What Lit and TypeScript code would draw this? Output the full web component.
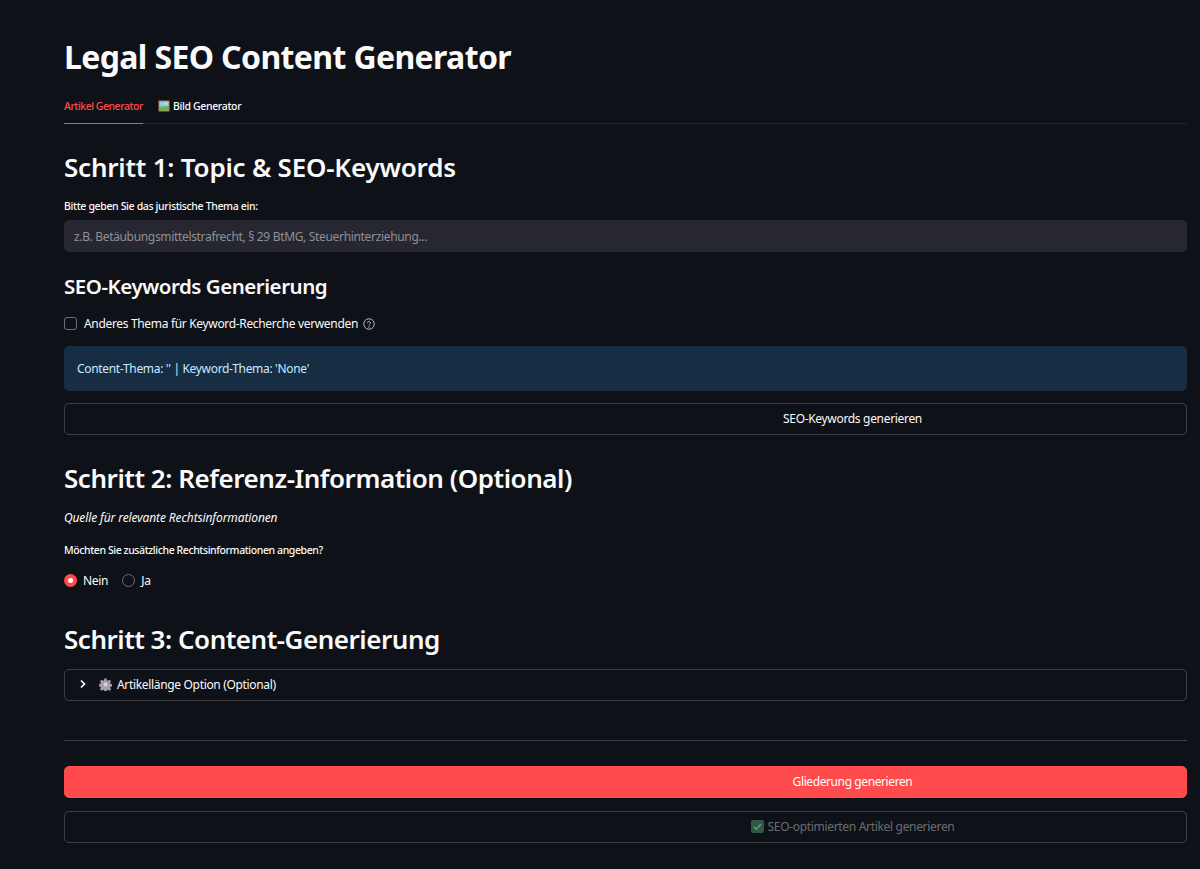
import { LitElement, html, css } from "lit";
import { customElement } from "lit/decorators.js";

@customElement("app-root")
export class AppRoot extends LitElement {
  static styles = css`
    :host { display: block; min-height: 869px; background: #0e1117; color: #fafafa; font-family: "Noto Sans", "Open Sans", sans-serif; overflow: hidden; }
    .page { display: flex; flex-direction: column; padding: 40px 13px 26px 64px; }
    h1, h2, h3, p { margin: 0; }
    h1 { font-size: 32px; line-height: 34px; font-weight: 700; letter-spacing: -0.63px; }
    h2 { font-size: 26px; line-height: 34px; font-weight: 600; }
    h3 { font-size: 20.5px; line-height: 28px; font-weight: 600; letter-spacing: -0.47px; margin-top: 20px; }
    .tabs { display: flex; gap: 15px; height: 34px; margin-top: 16px; border-bottom: 1px solid #262730; box-sizing: border-box; }
    .tab { display: flex; align-items: center; gap: 3px; font-size: 10.5px; letter-spacing: -0.34px; font-weight: 500; height: 33px; box-sizing: border-box; padding-bottom: 1px; }
    .tab.active { color: #ff4b4b; border-bottom: 1px solid #ff4b4b; height: 34px; padding-bottom: 2px; letter-spacing: -0.48px; }
    .s1 { margin-top: 26px; letter-spacing: -0.22px; }
    .label { font-size: 10.5px; line-height: 14px; font-weight: 500; }
    .l1 { margin-top: 15px; letter-spacing: -0.35px; }
    .input { margin-top: 7px; height: 32px; border-radius: 5px; background: #262730; color: #8f9097; display: flex; align-items: center; padding-left: 10px; font-size: 12px; letter-spacing: -0.33px; }
    .check { display: flex; align-items: center; margin-top: 15px; height: 17px; font-size: 12px; letter-spacing: -0.33px; }
    .box { width: 11px; height: 11px; border: 1px solid #6b6d75; border-radius: 3px; margin-right: 7px; }
    .check svg { margin-left: 5px; }
    .info { margin-top: 14px; height: 45px; border-radius: 5px; background: #172d43; color: #c7ebff; display: flex; align-items: center; padding-left: 13px; font-size: 12px; letter-spacing: -0.32px; }
    .btn { height: 32px; box-sizing: border-box; border: 1px solid rgba(250,250,250,.2); border-radius: 5px; display: flex; align-items: center; justify-content: center; padding: 0 0 2px 454px; font-size: 12px; letter-spacing: -0.32px; gap: 4px; }
    .b1 { margin-top: 12px; }
    .s2 { margin-top: 26px; letter-spacing: -0.45px; }
    .em { margin-top: 14px; font-style: italic; font-size: 12px; line-height: 18px; letter-spacing: -0.12px; }
    .l2 { margin-top: 16px; letter-spacing: -0.41px; }
    .radios { display: flex; margin-top: 15px; height: 16px; align-items: center; font-size: 12px; letter-spacing: -0.3px; }
    .radio { width: 13px; height: 13px; border-radius: 50%; box-sizing: border-box; margin-right: 6px; }
    .radio.on { background: #ff4b4b; display: flex; align-items: center; justify-content: center; }
    .radio.on::after { content: ""; width: 5px; height: 5px; border-radius: 50%; background: #fff; }
    .radio.off { border: 1px solid #6b6d75; margin-left: 14px; }
    .s3 { margin-top: 34px; letter-spacing: -0.48px; }
    .exp { margin-top: 13px; height: 32px; box-sizing: border-box; border: 1px solid rgba(250,250,250,.2); border-radius: 5px; display: flex; align-items: center; padding: 0 0 2px 13px; font-size: 12px; letter-spacing: -0.33px; }
    .exp .gear { margin-left: 11px; margin-right: 5px; }
    hr { border: 0; height: 1px; background: rgba(250,250,250,.2); margin: 39px 0 25px; width: 100%; }
    .primary { background: #ff4b4b; border-color: #ff4b4b; color: #fff; letter-spacing: -0.4px; }
    .disabled { margin-top: 13px; color: rgba(250,250,250,.4); }
  `;
  render() {
    return html`<div class="page">
      <h1>Legal SEO Content Generator</h1>
      <div class="tabs">
        <div class="tab active">Artikel Generator</div>
        <div class="tab">
          <svg width="12" height="12" viewBox="0 0 12 12">
            <rect x=".5" y=".5" width="11" height="11" fill="#b9824f"/>
            <rect x="1.5" y="1.5" width="9" height="5" fill="#8fd0ee"/>
            <rect x="1.5" y="6.5" width="9" height="4" fill="#62b35a"/>
            <path d="M1.5 7.5 4.5 5l3 2.5z" fill="#7cc46e"/>
            <circle cx="8" cy="3.5" r="1" fill="#f7e29a"/>
          </svg>
          Bild Generator
        </div>
      </div>
      <h2 class="s1">Schritt 1: Topic &amp; SEO-Keywords</h2>
      <div class="label l1">Bitte geben Sie das juristische Thema ein:</div>
      <div class="input">z.B. Betäubungsmittelstrafrecht, § 29 BtMG, Steuerhinterziehung...</div>
      <h3>SEO-Keywords Generierung</h3>
      <div class="check">
        <span class="box"></span>Anderes Thema für Keyword-Recherche verwenden
        <svg width="12" height="12" viewBox="0 0 24 24" fill="none" stroke="#b4b5b9" stroke-width="2">
          <circle cx="12" cy="12" r="10.5"/>
          <path d="M8.8 9a3.3 3.3 0 0 1 6.3 1c0 2.2-3.1 2.6-3.1 4.4" stroke-linecap="round"/>
          <circle cx="12" cy="18" r=".6" fill="#b4b5b9"/>
        </svg>
      </div>
      <div class="info">Content-Thema: '' | Keyword-Thema: 'None'</div>
      <div class="btn b1">SEO-Keywords generieren</div>
      <h2 class="s2">Schritt 2: Referenz-Information (Optional)</h2>
      <p class="em">Quelle für relevante Rechtsinformationen</p>
      <div class="label l2">Möchten Sie zusätzliche Rechtsinformationen angeben?</div>
      <div class="radios">
        <span class="radio on"></span>Nein<span class="radio off"></span>Ja
      </div>
      <h2 class="s3">Schritt 3: Content-Generierung</h2>
      <div class="exp">
        <svg width="10" height="10" viewBox="0 0 10 10" fill="none" stroke="#fafafa" stroke-width="1.7"><path d="M3 1.5 6.5 5 3 8.5"/></svg>
        <svg class="gear" width="13" height="13" viewBox="0 0 24 24" fill="#a79fb0">
          <path d="M10 1h4l.6 3 2.2.9 2.6-1.7 2.8 2.8-1.7 2.6.9 2.2 3 .6v4l-3 .6-.9 2.2 1.7 2.6-2.8 2.8-2.6-1.7-2.2.9-.6 3h-4l-.6-3-2.2-.9-2.6 1.7-2.8-2.8 1.7-2.6-.9-2.2-3-.6v-4l3-.6.9-2.2-1.7-2.6 2.8-2.8 2.6 1.7 2.2-.9z"/>
          <circle cx="12" cy="12" r="3.5" fill="#d9d4de"/>
        </svg>
        Artikellänge Option (Optional)
      </div>
      <hr />
      <div class="btn primary">Gliederung generieren</div>
      <div class="btn disabled">
        <svg width="13" height="13" viewBox="0 0 13 13">
          <rect width="13" height="13" rx="2" fill="#2c5a43"/>
          <path d="M3 6.8 5.4 9.2 10 4" fill="none" stroke="#7c8f86" stroke-width="1.5"/>
        </svg>
        SEO-optimierten Artikel generieren
      </div>
    </div>`;
  }
}
